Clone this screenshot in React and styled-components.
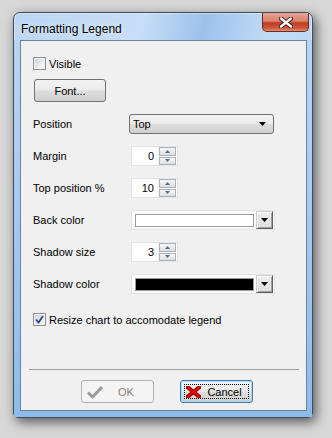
import React from "react";
import styled, { createGlobalStyle } from "styled-components";

const Global = createGlobalStyle`
  html, body { margin: 0; padding: 0; background: #d7d7d7; }
  #root { padding: 12px 0 0 13px; height: 438px; box-sizing: border-box; }
  * { box-sizing: border-box; }
`;

const Window = styled.div`
  width: 300px;
  height: 406px;
  border: 1px solid #3e4c5c;
  border-radius: 7px 7px 5px 5px;
  background: linear-gradient(100deg, #bcd6f2 0%, #c7def6 35%, #9cc2ec 52%, #c2dbf5 70%, #b9d4f1 100%);
  box-shadow: 0 0 0 1px rgba(255,255,255,0.35) inset, 3px 4px 12px rgba(0,0,0,0.6);
  display: flex;
  flex-direction: column;
  font-family: "Liberation Sans", Arial, sans-serif;
  font-size: 11px;
  color: #000;
`;

const TitleBar = styled.div`
  height: 27px;
  display: flex;
  align-items: flex-start;
  padding-left: 7px;
`;

const Title = styled.span`
  font-size: 12px;
  line-height: 14px;
  margin-top: 9px;
  color: #000;
  text-shadow: 0 0 6px rgba(255,255,255,0.9);
`;

const CloseButton = styled.div`
  margin-left: auto;
  margin-right: 3px;
  width: 47px;
  height: 19px;
  border: 1px solid #6b2a22;
  border-top: none;
  border-radius: 0 0 5px 5px;
  background: linear-gradient(#e8a293 0%, #d98270 45%, #c13c22 55%, #cf5a3c 85%, #e0937c 100%);
  display: flex;
  align-items: center;
  justify-content: center;
`;

const Frame = styled.div`
  flex: 1;
  display: flex;
  padding: 0 5px 6px 6px;
  background: linear-gradient(#b9d5f3, #8dbbec);
`;

const Client = styled.div`
  flex: 1;
  border: 1px solid #6f8398;
  background: #f0f0f0;
  display: flex;
  flex-direction: column;
  padding: 16px 7px 7px 12px;
`;

const CheckRow = styled.label`
  display: flex;
  align-items: center;
  height: 13px;
  margin-top: ${(p) => p.$mt || 0}px;
`;

const Box = styled.span`
  width: 13px;
  height: 13px;
  border: 1px solid #8e8f8f;
  background: linear-gradient(135deg, #cbcfd5 0%, #eef0f2 70%, #fafbfc 100%);
  box-shadow: inset 0 0 0 1px #f4f4f4;
  display: flex;
  align-items: center;
  justify-content: center;
  margin-right: 3px;
`;

const PushButton = styled.div`
  width: 73px;
  height: 23px;
  border: 1px solid ${(p) => (p.$disabled ? "#adb2b5" : "#707070")};
  border-radius: 3px;
  background: ${(p) =>
    p.$disabled
      ? "#f4f4f4"
      : "linear-gradient(#f2f2f2 0%, #ebebeb 48%, #dddddd 52%, #cfcfcf 100%)"};
  color: ${(p) => (p.$disabled ? "#838383" : "#000")};
  display: flex;
  align-items: center;
  justify-content: center;
  position: relative;
`;

const FontButton = styled(PushButton)`
  width: 72px;
  margin: 9px 0 0 1px;
`;

const DialogButton = styled(PushButton)`
  justify-content: flex-start;
  padding-left: 5px;
  ${(p) =>
    p.$focused &&
    `
    border-color: #3c7fb1;
    box-shadow: inset 0 0 0 1px #a6d8f2;
  `}
`;

const FocusRect = styled.span`
  position: absolute;
  inset: 3px;
  border: 1px dotted #000;
  pointer-events: none;
`;

const ButtonText = styled.span`
  flex: 1;
  text-align: center;
  padding-right: 4px;
`;

const FieldGrid = styled.div`
  margin-top: 12px;
  display: grid;
  grid-template-columns: 98px 1fr;
  grid-auto-rows: 20px;
  row-gap: 12px;
  align-items: center;
`;

const Combo = styled.div`
  margin-left: -2px;
  width: 145px;
  height: 20px;
  border: 1px solid #707070;
  border-radius: 3px;
  background: linear-gradient(#f2f2f2 0%, #ebebeb 48%, #dddddd 52%, #cfcfcf 100%);
  display: flex;
  align-items: center;
  padding: 0 7px 0 3px;
  justify-content: space-between;
`;

const Spin = styled.div`
  width: 47px;
  height: 20px;
  border: 1px solid #e2e3e6;
  background: #fff;
  display: flex;
  align-items: center;
  padding: 1px 1px 1px 0;
`;

const SpinValue = styled.span`
  flex: 1;
  text-align: right;
  padding-right: 5px;
`;

const SpinButtons = styled.div`
  width: 17px;
  height: 18px;
  display: flex;
  flex-direction: column;
  gap: 1px;
`;

const SpinBtn = styled.div`
  flex: 1;
  border: 1px solid #a9b0b9;
  background: linear-gradient(#f6f6f6, #dedede);
  display: flex;
  align-items: center;
  justify-content: center;
`;

const ColorCombo = styled.div`
  width: 144px;
  height: 20px;
  border: 1px solid #e2e3e6;
  background: #fafafa;
  display: flex;
  align-items: center;
  padding: 0 1px 0 3px;
  gap: 2px;
`;

const Swatch = styled.div`
  flex: 1;
  height: 13px;
  border: 1px solid #9b9b9b;
  background: ${(p) => p.$color};
`;

const DropBtn = styled.div`
  width: 17px;
  height: 18px;
  border: 1px solid;
  border-color: #d0d0d0 #5f5f5f #5f5f5f #d0d0d0;
  background: linear-gradient(#eeeeee, #dcdcdc);
  box-shadow: inset 1px 1px 0 #fff, inset -1px -1px 0 #a0a0a0;
  display: flex;
  align-items: center;
  justify-content: center;
`;

const Separator = styled.div`
  margin: auto 0 0 -4px;
  width: 270px;
  height: 1px;
  background: #a0a0a0;
`;

const ButtonRow = styled.div`
  margin: 10px 0 0 48px;
  display: flex;
  gap: 26px;
`;

const Arrow = ({ color = "#000" }) => (
  <svg width="7" height="4" viewBox="0 0 7 4">
    <path d="M0 0h7L3.5 4z" fill={color} />
  </svg>
);

const SpinArrow = ({ up }) => (
  <svg width="5" height="3" viewBox="0 0 5 3">
    <path d={up ? "M0 3h5L2.5 0z" : "M0 0h5L2.5 3z"} fill="#4b6aa6" />
  </svg>
);

const CheckMark = () => (
  <svg width="9" height="9" viewBox="0 0 9 9">
    <path d="M1 4.5 L3.5 7.5 L8 1" fill="none" stroke="#2c4a8a" strokeWidth="1.8" />
  </svg>
);

const SpinBox = ({ value }) => (
  <Spin>
    <SpinValue>{value}</SpinValue>
    <SpinButtons>
      <SpinBtn>
        <SpinArrow up />
      </SpinBtn>
      <SpinBtn>
        <SpinArrow />
      </SpinBtn>
    </SpinButtons>
  </Spin>
);

const ColorBox = ({ color }) => (
  <ColorCombo>
    <Swatch $color={color} />
    <DropBtn>
      <Arrow />
    </DropBtn>
  </ColorCombo>
);

export default function App() {
  return (
    <>
      <Global />
      <Window>
        <TitleBar>
          <Title>Formatting Legend</Title>
          <CloseButton>
            <svg width="14" height="11" viewBox="0 0 14 11">
              <path d="M2 1.5 L12 9.5 M12 1.5 L2 9.5" stroke="#3a1a14" strokeWidth="4.2" strokeLinecap="round" />
              <path d="M2 1.5 L12 9.5 M12 1.5 L2 9.5" stroke="#fff" strokeWidth="2.4" strokeLinecap="round" />
            </svg>
          </CloseButton>
        </TitleBar>
        <Frame>
          <Client>
            <CheckRow>
              <Box />
              Visible
            </CheckRow>
            <FontButton>Font...</FontButton>
            <FieldGrid>
              <span>Position</span>
              <Combo>
                <span>Top</span>
                <Arrow />
              </Combo>
              <span>Margin</span>
              <SpinBox value="0" />
              <span>Top position %</span>
              <SpinBox value="10" />
              <span>Back color</span>
              <ColorBox color="#ffffff" />
              <span>Shadow size</span>
              <SpinBox value="3" />
              <span>Shadow color</span>
              <ColorBox color="#000000" />
            </FieldGrid>
            <CheckRow $mt={19}>
              <Box>
                <CheckMark />
              </Box>
              Resize chart to accomodate legend
            </CheckRow>
            <Separator />
            <ButtonRow>
              <DialogButton $disabled>
                <svg width="16" height="14" viewBox="0 0 16 14">
                  <path d="M1 7.5 L5.5 12 L15 2" fill="none" stroke="#9a9a9a" strokeWidth="3" strokeLinejoin="round" />
                </svg>
                <ButtonText>OK</ButtonText>
              </DialogButton>
              <DialogButton $focused>
                <svg width="15" height="12" viewBox="0 0 15 12">
                  <path d="M2 1.5 L13 10.5 M13 1.5 L2 10.5" stroke="#7a0000" strokeWidth="4" strokeLinecap="square" />
                  <path d="M2 1.5 L13 10.5 M13 1.5 L2 10.5" stroke="#e00000" strokeWidth="2.4" strokeLinecap="square" />
                </svg>
                <ButtonText>Cancel</ButtonText>
                <FocusRect />
              </DialogButton>
            </ButtonRow>
          </Client>
        </Frame>
      </Window>
    </>
  );
}
